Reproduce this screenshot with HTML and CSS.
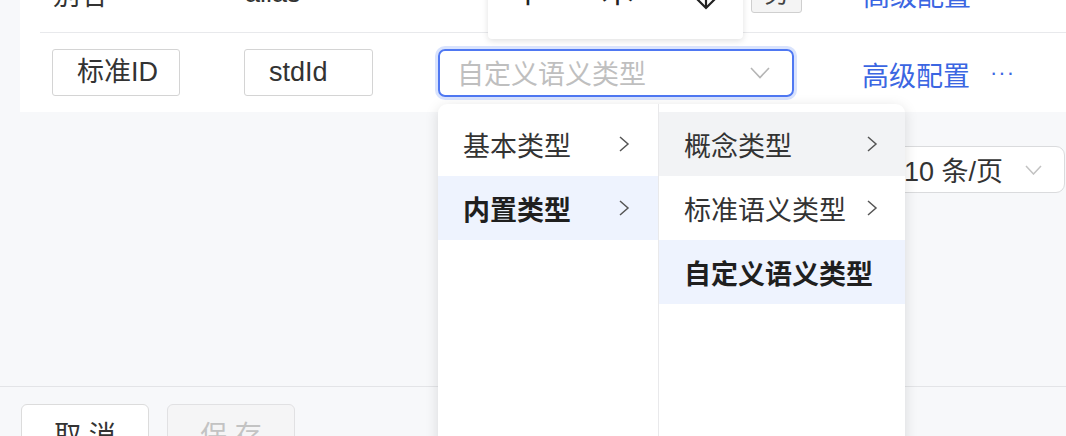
FILE: index.html
```html
<!DOCTYPE html>
<html>
<head>
  <meta charset="utf-8">
  <meta name="viewport" content="width=device-width">
  <title>字段配置</title>

  <link rel="stylesheet" href="styles.css">

</head>
<body>
  <div id="page">

    <div class="table">
      <div class="row row-first">
        <div class="cell">别名</div>
        <div class="cell">alias</div>
        <div class="cell"></div>
        <div class="cell"><span class="link">高级配置</span></div>
      </div>
      <div class="row">
        <div class="cell"><div class="field">标准ID</div></div>
        <div class="cell"><div class="field">stdId</div></div>
        <div class="cell">
          <div class="select focused">
            <span class="placeholder">自定义语义类型</span>
            <svg class="arrow" width="20" height="12" viewBox="0 0 20 12"><polyline points="1,1 10,10.5 19,1" fill="none" stroke="#b5b5b5" stroke-width="1.6"/></svg>
          </div>
        </div>
        <div class="cell">
          <span class="link">高级配置</span>
          <span class="more">···</span>
        </div>
      </div>
    </div>

    <div class="pager">
      <div class="pageSize">
        <span>10 条/页</span>
        <svg class="arrow" width="17" height="10" viewBox="0 0 17 10"><polyline points="1,1 8.5,9 16,1" fill="none" stroke="#c2c2c2" stroke-width="1.5"/></svg>
      </div>
    </div>

    <div class="footer">
      <span class="btn">取 消</span>
      <span class="btn disabled">保 存</span>
    </div>

    <!-- popup from the row above, only its bottom is on screen -->
    <div class="toolPopup">
      <span>中</span>
      <span>木</span>
      <svg width="30" height="60" viewBox="0 0 30 60"><line x1="15" y1="0" x2="15" y2="42" stroke="#222" stroke-width="2.2"/><polyline points="4,31 15,42 26,31" fill="none" stroke="#222" stroke-width="2.2"/></svg>
    </div>
    <div class="miniBtn">另</div>

    <!-- cascader dropdown -->
    <div class="cascader">
      <ul class="menu menu-1">
        <li>基本类型 <svg class="chev" width="12" height="18" viewBox="0 0 12 18"><polyline points="2,2 10,9 2,16" fill="none" stroke="#555" stroke-width="1.5"/></svg></li>
        <li class="active">内置类型 <svg class="chev" width="12" height="18" viewBox="0 0 12 18"><polyline points="2,2 10,9 2,16" fill="none" stroke="#555" stroke-width="1.5"/></svg></li>
      </ul>
      <ul class="menu menu-2">
        <li class="hover">概念类型 <svg class="chev" width="12" height="18" viewBox="0 0 12 18"><polyline points="2,2 10,9 2,16" fill="none" stroke="#555" stroke-width="1.5"/></svg></li>
        <li>标准语义类型 <svg class="chev" width="12" height="18" viewBox="0 0 12 18"><polyline points="2,2 10,9 2,16" fill="none" stroke="#555" stroke-width="1.5"/></svg></li>
        <li class="active">自定义语义类型</li>
      </ul>
    </div>

  </div>
</body>
</html>
```
FILE: styles.css
```css
    * {
      box-sizing: border-box;
    }

    body {
      margin: 0;
      background: #f7f8fa;
      font-family: "Liberation Sans", "Noto Sans CJK SC", sans-serif;
      font-size: 27px;
      color: #333;
      overflow: hidden;
    }

    #page {
      position: relative;
      width: 1066px;
      height: 436px;
      display: flex;
      flex-direction: column;
      overflow: hidden;
    }

    .table {
      margin-left: 20px;
      padding-left: 20px;
      background: #ffffff;
    }

    .row {
      display: grid;
      grid-template-columns: 192px 194px 424px 1fr;
      align-items: center;
      height: 79px;
    }

    .row-first {
      margin-top: -46px;
      border-bottom: 1px solid #e8e9ec;
    }

    .cell {
      padding-left: 12px;
      display: flex;
      align-items: center;
      white-space: nowrap;
    }

    .row-first .cell {
      padding-left: 13px;
    }

    .field {
      width: 128px;
      height: 47px;
      border: 1px solid #d4d4d4;
      border-radius: 3px;
      padding-left: 24px;
      line-height: 45px;
      color: #333;
    }

    .cell:nth-child(2) .field {
      width: 129px;
    }

    .select {
      width: 356px;
      height: 48px;
      border: 2px solid #4f78f2;
      border-radius: 7px;
      box-shadow: 0 0 0 3px #d9e3fd;
      display: flex;
      align-items: center;
      justify-content: space-between;
      padding: 0 22px 0 17px;
    }

    .placeholder {
      color: #bfbfbf;
    }

    .link {
      color: #3b66e2;
      margin-top: 3px;
    }

    .more {
      color: #3b66e2;
      margin-left: 20px;
      font-size: 22px;
      letter-spacing: 1px;
    }

    .pager {
      display: flex;
      justify-content: flex-end;
      padding: 34px 1px 0 0;
    }

    .pageSize {
      width: 180px;
      height: 47px;
      border: 1px solid #dadbdd;
      border-radius: 9px;
      background: #fff;
      display: flex;
      align-items: center;
      justify-content: space-between;
      padding: 0 22px 0 18px;
      color: #333;
    }

    .footer {
      margin-top: auto;
      height: 50px;
      border-top: 1px solid #e3e4e7;
      display: flex;
      align-items: flex-start;
      gap: 18px;
      padding: 17px 0 0 21px;
    }

    .btn {
      width: 128px;
      height: 62px;
      flex-shrink: 0;
      border: 1px solid #dcdcdc;
      border-radius: 6px;
      background: #fff;
      text-align: center;
      line-height: 62px;
      color: #333;
    }

    .btn.disabled {
      background: #f5f5f6;
      border-color: #e1e1e3;
      color: #c3c3c3;
    }

    .toolPopup {
      position: absolute;
      left: 488px;
      top: -40px;
      width: 255px;
      height: 79px;
      background: #fff;
      border-radius: 0 0 4px 4px;
      box-shadow: 0 2px 6px rgba(0, 0, 0, 0.12);
      display: flex;
      align-items: flex-start;
      padding: 6px 22px 0 24px;
      justify-content: space-between;
      color: #222;
      font-size: 32px;
      line-height: 50px;
    }

    .miniBtn {
      position: absolute;
      left: 751px;
      top: -20px;
      width: 51px;
      height: 33px;
      border: 1px solid #cfcfcf;
      border-radius: 3px;
      background: #f4f4f4;
      text-align: center;
      font-size: 24px;
      line-height: 26px;
      color: #444;
    }

    .cascader {
      position: absolute;
      left: 438px;
      top: 104px;
      width: 467px;
      height: 400px;
      background: #fff;
      border-radius: 9px;
      box-shadow: 0 3px 14px rgba(0, 0, 0, 0.13);
      display: flex;
    }

    .menu {
      margin: 0;
      padding: 8px 0 0 0;
      list-style: none;
    }

    .menu-1 {
      width: 221px;
      border-right: 1px solid #e9e9eb;
    }

    .menu-2 {
      flex: 1;
    }

    .menu li {
      height: 64px;
      display: flex;
      align-items: center;
      justify-content: space-between;
      padding: 0 27px 0 25px;
      color: #333;
    }

    .menu-1 li {
      padding-right: 28px;
    }

    .menu li.hover {
      background: #f2f3f5;
    }

    .menu li.active {
      background: #eef3fe;
      font-weight: bold;
      color: #1f1f1f;
    }
```
